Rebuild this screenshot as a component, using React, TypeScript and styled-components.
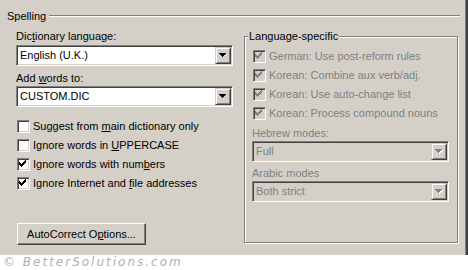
import React from 'react';
import styled, { createGlobalStyle } from 'styled-components';

const Global = createGlobalStyle`
    html, body {
        margin: 0;
        padding: 0;
        background: #fff;
    }
    body {
        font-family: "Liberation Sans", Arial, sans-serif;
        font-size: 11px;
    }
`

const Page = styled.div`
    width: 468px;
    height: 270px;
    display: flex;
    flex-direction: column;
    overflow: hidden;
`

const Dialog = styled.div`
    height: 255px;
    box-sizing: border-box;
    background: #d4d0c8;
    color: #000;
    padding: 10px 0 0 7px;
    box-shadow: inset -2px 0 #404040, inset -3px 0 #808080;
`

const SectionHead = styled.div`
    display: flex;
    align-items: flex-start;
    height: 13px;
    line-height: 13px;
    padding-right: 8px;
`

const Etch = styled.div`
    flex: 1;
    height: 0;
    margin: 5px 0 0 3px;
    border-top: 1px solid #808080;
    border-bottom: 1px solid #fff;
`

const Body = styled.div`
    display: flex;
    gap: 11px;
    margin-top: 7px;
    padding-left: 9px;
`

const LeftCol = styled.div`
    width: 217px;
    display: flex;
    flex-direction: column;
`

const Label = styled.div<{ $top?: number; $muted?: boolean }>`
    line-height: 13px;
    margin-top: ${p => p.$top || 0}px;
    margin-bottom: ${p => (p.$top !== undefined ? 1 : 2)}px;
    color: ${p => (p.$muted ? '#808080' : '#000')};
    white-space: nowrap;
`

const Combo = styled.div<{ $disabled?: boolean; $width?: number }>`
    width: ${p => (p.$width ? `${p.$width}px` : 'auto')};
    height: 21px;
    box-sizing: border-box;
    display: flex;
    align-items: center;
    padding: 1px;
    border-top: 1px solid #808080;
    border-left: 1px solid #808080;
    border-bottom: 1px solid #fff;
    border-right: 1px solid #fff;
    box-shadow: inset 1px 1px #404040, inset -1px -1px #d4d0c8;
    background: ${p => (p.$disabled ? '#d4d0c8' : '#fff')};
    color: ${p => (p.$disabled ? '#808080' : '#000')};
`

const ComboText = styled.span`
    flex: 1;
    padding-left: 2px;
    line-height: 13px;
    white-space: nowrap;
`

const DropButton = styled.span`
    width: 16px;
    height: 17px;
    box-sizing: border-box;
    display: flex;
    align-items: center;
    justify-content: center;
    background: #d4d0c8;
    border-top: 1px solid #d4d0c8;
    border-left: 1px solid #d4d0c8;
    border-bottom: 1px solid #404040;
    border-right: 1px solid #404040;
    box-shadow: inset 1px 1px #fff, inset -1px -1px #808080;
`

const Checks = styled.div<{ $top: number }>`
    display: flex;
    flex-direction: column;
    gap: 6px;
    margin-top: ${p => p.$top}px;
`

const CheckRow = styled.div<{ $muted?: boolean }>`
    display: flex;
    align-items: center;
    gap: 3px;
    height: 13px;
    line-height: 13px;
    padding-left: 1px;
    white-space: nowrap;
    color: ${p => (p.$muted ? '#808080' : '#000')};
`

const Box = styled.span<{ $disabled?: boolean }>`
    width: 13px;
    height: 13px;
    box-sizing: border-box;
    flex: none;
    display: flex;
    border-top: 1px solid #808080;
    border-left: 1px solid #808080;
    border-bottom: 1px solid #fff;
    border-right: 1px solid #fff;
    box-shadow: inset 1px 1px #404040, inset -1px -1px #d4d0c8;
    background: ${p => (p.$disabled ? '#d4d0c8' : '#fff')};
`

const PushButton = styled.div`
    width: 129px;
    height: 22px;
    box-sizing: border-box;
    margin: 33px 0 0 1px;
    display: flex;
    align-items: center;
    justify-content: center;
    background: #d4d0c8;
    border-top: 1px solid #fff;
    border-left: 1px solid #fff;
    border-bottom: 1px solid #404040;
    border-right: 1px solid #404040;
    box-shadow: inset -1px -1px #808080;
    line-height: 13px;
`

const Group = styled.fieldset`
    margin: 0;
    min-width: 0;
    width: 214px;
    height: 213px;
    box-sizing: border-box;
    padding: 7px 8px 0 7px;
    border: 1px solid #808080;
    box-shadow: 1px 1px #fff, inset 1px 1px #fff;
    display: flex;
    flex-direction: column;
`

const Legend = styled.legend`
    margin-left: -4px;
    padding: 0 1px;
    line-height: 13px;
    background: #d4d0c8;
`

const Footer = styled.div`
    height: 15px;
    background: #fff;
    padding-left: 3px;
    font-family: "DejaVu Sans", sans-serif;
    font-style: italic;
    font-size: 12px;
    line-height: 15px;
    letter-spacing: 2px;
    color: #b0b0b0;
`

const Check = ({ color }: { color: string }) => (
    <svg width="11" height="11" viewBox="0 0 11 11" shapeRendering="crispEdges">
        {[2, 3, 4, 3, 2, 1, 0].map((y, x) => (
            <rect key={x} x={x + 1} y={y + 1} width="1" height="3" fill={color} />
        ))}
    </svg>
)

const CheckBox = ({ checked, disabled }: { checked?: boolean; disabled?: boolean }) => (
    <Box $disabled={disabled}>
        {checked && <Check color={disabled ? '#808080' : '#000'} />}
    </Box>
)

const Arrow = ({ disabled }: { disabled?: boolean }) => (
    <svg width="8" height="5" viewBox="0 0 8 5" shapeRendering="crispEdges">
        {disabled && <path d="M1 1h7v1h-1v1h-1v1h-1v1h-1v-1h-1v-1h-1v-1h-1z" fill="#fff" />}
        <path d="M0 0h7v1h-1v1h-1v1h-1v1h-1v-1h-1v-1h-1v-1h-1z" fill={disabled ? '#808080' : '#000'} />
    </svg>
)

const ComboBox = ({ value, disabled, width }: { value: string; disabled?: boolean; width?: number }) => (
    <Combo $disabled={disabled} $width={width}>
        <ComboText>{value}</ComboText>
        <DropButton>
            <Arrow disabled={disabled} />
        </DropButton>
    </Combo>
)

const langOptions = [
    'German: Use post-reform rules',
    'Korean: Combine aux verb/adj.',
    'Korean: Use auto-change list',
    'Korean: Process compound nouns',
]

const App = () => {
    return (
        <Page>
            <Global />
            <Dialog>
                <SectionHead>
                    <span>Spelling</span>
                    <Etch />
                </SectionHead>
                <Body>
                    <LeftCol>
                        <Label>Dic<u>t</u>ionary language:</Label>
                        <ComboBox value="English (U.K.)" />
                        <Label $top={6}>Add <u>w</u>ords to:</Label>
                        <ComboBox value="CUSTOM.DIC" />
                        <Checks $top={13}>
                            <CheckRow>
                                <CheckBox />
                                <span>Suggest from <u>m</u>ain dictionary only</span>
                            </CheckRow>
                            <CheckRow>
                                <CheckBox />
                                <span>Ignore words in <u>U</u>PPERCASE</span>
                            </CheckRow>
                            <CheckRow>
                                <CheckBox checked />
                                <span>Ignore words with num<u>b</u>ers</span>
                            </CheckRow>
                            <CheckRow>
                                <CheckBox checked />
                                <span>Ignore Internet and <u>f</u>ile addresses</span>
                            </CheckRow>
                        </Checks>
                        <PushButton>AutoCorrect O<u>p</u>tions...</PushButton>
                    </LeftCol>
                    <Group>
                        <Legend>Language-specific</Legend>
                        <Checks $top={0}>
                            {langOptions.map(text => (
                                <CheckRow key={text} $muted>
                                    <CheckBox checked disabled />
                                    <span>{text}</span>
                                </CheckRow>
                            ))}
                        </Checks>
                        <Label $top={7} $muted>Hebrew modes:</Label>
                        <ComboBox value="Full" disabled width={197} />
                        <Label $top={5} $muted>Arabic modes</Label>
                        <ComboBox value="Both strict" disabled width={197} />
                    </Group>
                </Body>
            </Dialog>
            <Footer>© BetterSolutions.com</Footer>
        </Page>
    );
};

export default App;
